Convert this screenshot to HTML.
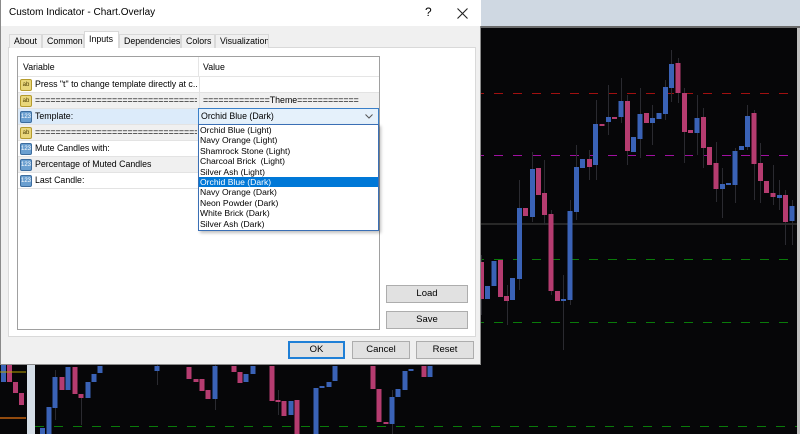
<!DOCTYPE html>
<html><head><meta charset="utf-8"><style>
*{margin:0;padding:0;box-sizing:border-box}
body{width:800px;height:434px;overflow:hidden;background:#060608;position:relative;font-family:"Liberation Sans",sans-serif;font-size:9px;color:#000}
#chart{position:absolute;left:0;top:0}
.dlg{position:absolute;left:0;top:0;width:481px;height:365px;background:#f0f0f0;border:1px solid #8a8a8a;border-top:none}
.title{position:absolute;left:0;top:0;width:480px;height:26px;background:#fff}
.title span{position:absolute;left:8px;top:7px;font-size:10px}
.tab{position:absolute;top:34px;height:14px;border:1px solid #d9d9d9;border-bottom:none;background:#f0f0f0;font-size:8.8px;padding-left:4px;line-height:13px;white-space:nowrap;overflow:hidden}
.tab.sel{top:31px;height:17px;background:#fff;z-index:2;line-height:14px}
.page{position:absolute;left:7px;top:47px;width:468px;height:290px;background:#fff;border:1px solid #d9d9d9}
.grid{position:absolute;left:16px;top:56px;width:363px;height:274px;border:1px solid #a0a0a0;background:#fff}
.hdr{position:absolute;left:0;top:0;width:361px;height:20px;border-bottom:1px solid #e5e5e5}
.row{position:absolute;left:0;width:361px;height:16px;border-bottom:1px solid #e3e3e3;font-size:8.8px;line-height:15px;white-space:nowrap}
.row .v{position:absolute;left:17px;top:0;width:162px;overflow:hidden}
.row .val{position:absolute;left:181px;top:0;width:180px;height:16px;border-left:1px solid #e3e3e3;padding-left:3px;overflow:hidden}
.ic{position:absolute;left:2px;top:2px;width:12px;height:12px;border-radius:2px;font-size:6px;line-height:11px;text-align:center}
.ab{background:#e9d77b;border:1px solid #b59b2d;color:#4a3a00}
.n{background:#6a9fd0;border:1px solid #3c6c9e;color:#fff}
.btn{position:absolute;height:18px;background:#e1e1e1;border:1px solid #adadad;text-align:center;font-size:9.5px;line-height:16px}
.list{position:absolute;left:197px;top:124px;width:181px;height:107px;background:#fff;border:1px solid #3a6fb5;font-size:8.6px;box-shadow:2px 2px 3px rgba(0,0,0,.25)}
.list div{height:10.4px;line-height:10.4px;padding-left:1px;white-space:nowrap}
.list .s{background:#0078d7;color:#fff}
</style></head><body>
<svg id="chart" width="800" height="434">
<rect x="480" y="0" width="320" height="26" fill="#cfd8e2"/>
<rect x="480" y="26" width="320" height="2" fill="#6a6a6a"/>
<rect x="797" y="28" width="3" height="406" fill="#bfbfbf"/>
<rect x="27" y="365" width="8" height="69" fill="#d4dde6"/>
<g stroke-dasharray="9,10" stroke-width="1">
<line x1="0" y1="93.5" x2="797" y2="93.5" stroke="#a01010"/>
<line x1="0" y1="155.5" x2="797" y2="155.5" stroke="#a010a0"/>
<line x1="0" y1="259.5" x2="797" y2="259.5" stroke="#0a7a0a"/>
<line x1="0" y1="322.5" x2="797" y2="322.5" stroke="#0a7a0a"/>
<line x1="35" y1="426.5" x2="797" y2="426.5" stroke="#0a7a0a"/>
</g>
<line x1="0" y1="224" x2="797" y2="224" stroke="#333" stroke-width="1.5"/>
<g fill="#2a2a30">
<rect x="481" y="255" width="1" height="60"/><rect x="507" y="285" width="1" height="40"/><rect x="519" y="180" width="1" height="110"/><rect x="532" y="152" width="1" height="70"/><rect x="544" y="160" width="1" height="65"/><rect x="551" y="210" width="1" height="85"/><rect x="563" y="275" width="1" height="75"/><rect x="570" y="200" width="1" height="105"/><rect x="576" y="145" width="1" height="75"/><rect x="589" y="150" width="1" height="30"/><rect x="596" y="100" width="1" height="80"/><rect x="608" y="85" width="1" height="50"/><rect x="621" y="78" width="1" height="45"/><rect x="627" y="95" width="1" height="70"/><rect x="640" y="88" width="1" height="70"/><rect x="652" y="105" width="1" height="40"/><rect x="665" y="80" width="1" height="40"/><rect x="671" y="50" width="1" height="52"/><rect x="678" y="58" width="1" height="45"/><rect x="684" y="88" width="1" height="75"/><rect x="697" y="95" width="1" height="60"/><rect x="703" y="108" width="1" height="60"/><rect x="716" y="142" width="1" height="60"/><rect x="722" y="168" width="1" height="50"/><rect x="735" y="148" width="1" height="55"/><rect x="747" y="105" width="1" height="45"/><rect x="754" y="110" width="1" height="90"/><rect x="760" y="143" width="1" height="60"/><rect x="773" y="165" width="1" height="40"/><rect x="779" y="180" width="1" height="30"/><rect x="785" y="190" width="1" height="55"/><rect x="792" y="200" width="1" height="45"/>
<rect x="81" y="395" width="1" height="30"/><rect x="55" y="370" width="1" height="50"/><rect x="215" y="365" width="1" height="45"/><rect x="278" y="390" width="1" height="25"/><rect x="392" y="390" width="1" height="44"/><rect x="157" y="365" width="1" height="20"/>
</g>
<g fill="#3a62b6">
<rect x="485" y="286" width="5" height="13"/><rect x="491.5" y="261" width="5" height="25"/><rect x="510" y="278" width="5" height="22"/><rect x="517" y="208" width="5" height="71"/><rect x="530" y="169" width="5" height="48"/><rect x="561" y="299" width="5" height="2"/><rect x="567.5" y="211" width="5" height="89"/><rect x="574" y="167" width="5" height="45"/><rect x="580" y="159" width="5" height="9"/><rect x="593" y="124" width="5" height="41"/><rect x="606" y="117" width="5" height="5"/><rect x="618.5" y="101" width="5" height="16"/><rect x="631" y="137" width="5" height="15"/><rect x="637.5" y="114" width="5" height="25"/><rect x="650" y="118" width="5" height="5"/><rect x="656.5" y="113" width="5" height="6"/><rect x="663" y="87" width="5" height="27"/><rect x="669" y="64" width="5" height="24"/><rect x="694.5" y="118" width="5" height="15"/><rect x="720" y="184" width="5" height="5"/><rect x="726" y="183" width="5" height="2"/><rect x="732.5" y="151" width="5" height="34"/><rect x="739" y="146" width="5" height="4"/><rect x="745" y="116" width="5" height="31"/><rect x="777" y="195" width="5" height="3"/><rect x="789.5" y="206" width="5" height="15"/>
<rect x="46.5" y="407" width="5" height="27"/><rect x="52.5" y="377" width="5" height="31"/><rect x="65.5" y="367" width="5" height="23"/><rect x="85.5" y="382" width="5" height="16"/><rect x="91.5" y="374" width="5" height="8"/><rect x="97.5" y="366" width="5" height="7"/><rect x="154.5" y="366" width="5" height="5"/><rect x="212.5" y="366" width="5" height="33"/><rect x="243.5" y="374" width="5" height="8"/><rect x="250.5" y="366" width="5" height="8"/><rect x="288.5" y="401" width="5" height="14"/><rect x="313.5" y="388" width="5" height="46"/><rect x="319.5" y="386" width="5" height="2"/><rect x="326.5" y="382" width="5" height="5"/><rect x="332.5" y="366" width="5" height="15"/><rect x="389.5" y="397" width="5" height="27"/><rect x="395.5" y="389" width="5" height="8"/><rect x="402.5" y="371" width="5" height="19"/><rect x="408.5" y="369" width="5" height="2"/><rect x="427.5" y="366" width="5" height="11"/><rect x="40" y="428" width="5" height="6"/><rect x="1" y="365" width="5" height="17"/>
</g>
<g fill="#b53c70">
<rect x="479" y="262" width="5" height="37"/><rect x="498" y="260" width="5" height="37"/><rect x="504" y="296" width="5" height="5"/><rect x="523" y="208" width="5" height="8"/><rect x="536" y="168" width="5" height="27"/><rect x="542" y="193" width="5" height="22"/><rect x="548.5" y="214" width="5" height="77"/><rect x="555" y="291" width="5" height="10"/><rect x="587" y="159" width="5" height="8"/><rect x="599.5" y="124" width="5" height="2"/><rect x="612" y="117" width="5" height="2"/><rect x="625" y="101" width="5" height="50"/><rect x="644" y="113" width="5" height="10"/><rect x="675.5" y="63" width="5" height="30"/><rect x="682" y="93" width="5" height="39"/><rect x="688" y="130" width="5" height="3"/><rect x="701" y="117" width="5" height="31"/><rect x="707" y="147" width="5" height="18"/><rect x="713.5" y="163" width="5" height="26"/><rect x="751.5" y="113" width="5" height="51"/><rect x="758" y="163" width="5" height="18"/><rect x="764" y="181" width="5" height="12"/><rect x="770.5" y="193" width="5" height="4"/><rect x="783" y="195" width="5" height="27"/>
<rect x="59.5" y="377" width="5" height="13"/><rect x="72.5" y="367" width="5" height="27"/><rect x="78.5" y="394" width="5" height="4"/><rect x="186.5" y="367" width="5" height="12"/><rect x="193.5" y="379" width="5" height="3"/><rect x="199.5" y="379" width="5" height="12"/><rect x="205.5" y="390" width="5" height="9"/><rect x="231.5" y="366" width="5" height="6"/><rect x="237.5" y="372" width="5" height="11"/><rect x="269.5" y="366" width="5" height="35"/><rect x="275.5" y="400" width="5" height="2"/><rect x="281.5" y="401" width="5" height="15"/><rect x="294.5" y="400" width="5" height="34"/><rect x="370.5" y="366" width="5" height="23"/><rect x="376.5" y="389" width="5" height="33"/><rect x="383.5" y="422" width="5" height="2"/><rect x="421.5" y="366" width="5" height="11"/><rect x="7" y="365" width="5" height="17"/><rect x="13" y="382" width="5" height="11"/><rect x="19" y="393" width="5" height="12"/>
</g>
<line x1="0" y1="372" x2="26" y2="372" stroke="#b8a000"/>
<line x1="0" y1="418" x2="26" y2="418" stroke="#c06010" stroke-width="1.5"/>
</svg>

<div class="dlg">
<div class="title"><span>Custom Indicator - Chart.Overlay</span>
<span style="left:424px;top:5px;font-size:12px">?</span>
<svg style="position:absolute;left:456px;top:8px" width="11" height="11"><path d="M0.5 0.5L10.5 10.5M10.5 0.5L0.5 10.5" stroke="#222" stroke-width="1.1"/></svg>
</div>
<div class="page"></div>
<div class="tab" style="left:8px;width:33px">About</div>
<div class="tab" style="left:41px;width:42px">Common</div>
<div class="tab sel" style="left:83px;width:35px">Inputs</div>
<div class="tab" style="left:118px;width:62px">Dependencies</div>
<div class="tab" style="left:180px;width:34px">Colors</div>
<div class="tab" style="left:214px;width:54px">Visualization</div>
<div class="grid">
<div class="hdr"><span style="position:absolute;left:5px;top:5px;font-size:8.8px">Variable</span><span style="position:absolute;left:185px;top:5px;font-size:8.8px">Value</span><div style="position:absolute;left:180px;top:0;width:1px;height:20px;background:#e5e5e5"></div></div>
<div class="row" style="top:20px"><div class="ic ab">ab</div><span class="v">Press "t" to change template directly at c...</span><div class="val"></div></div>
<div class="row" style="top:36px;background:#f0f0f0"><div class="ic ab">ab</div><span class="v">==================================...</span><div class="val">=============Theme============</div></div>
<div class="row" style="top:52px;background:#dcebfa"><div class="ic n">123</div><span class="v">Template:</span><div class="val"></div></div>
<div class="row" style="top:68px;background:#f0f0f0"><div class="ic ab">ab</div><span class="v">==================================...</span><div class="val"></div></div>
<div class="row" style="top:84px"><div class="ic n">123</div><span class="v">Mute Candles with:</span><div class="val"></div></div>
<div class="row" style="top:100px;background:#f0f0f0"><div class="ic n">123</div><span class="v">Percentage of Muted Candles</span><div class="val"></div></div>
<div class="row" style="top:116px"><div class="ic n">123</div><span class="v">Last Candle:</span><div class="val"></div></div>
</div>
<div style="position:absolute;left:197px;top:108px;width:181px;height:17px;background:#e5f1fb;border:1px solid #3a7fc8;font-size:8.8px;line-height:15px;padding-left:2px">Orchid Blue (Dark)<svg style="position:absolute;right:5px;top:5px" width="8" height="5"><path d="M0.5 0.5L4 4L7.5 0.5" fill="none" stroke="#555"/></svg></div>
<div class="list">
<div>Orchid Blue (Light)</div><div>Navy Orange (Light)</div><div>Shamrock Stone (Light)</div><div>Charcoal Brick&nbsp; (Light)</div><div>Silver Ash (Light)</div><div class="s">Orchid Blue (Dark)</div><div>Navy Orange (Dark)</div><div>Neon Powder (Dark)</div><div>White Brick (Dark)</div><div>Silver Ash (Dark)</div>
</div>
<div class="btn" style="left:385px;top:285px;width:82px">Load</div>
<div class="btn" style="left:385px;top:311px;width:82px">Save</div>
<div class="btn" style="left:287px;top:341px;width:57px;border:2px solid #1f7fd6;line-height:14px">OK</div>
<div class="btn" style="left:351px;top:341px;width:58px">Cancel</div>
<div class="btn" style="left:415px;top:341px;width:58px">Reset</div>
</div>
</body></html>
